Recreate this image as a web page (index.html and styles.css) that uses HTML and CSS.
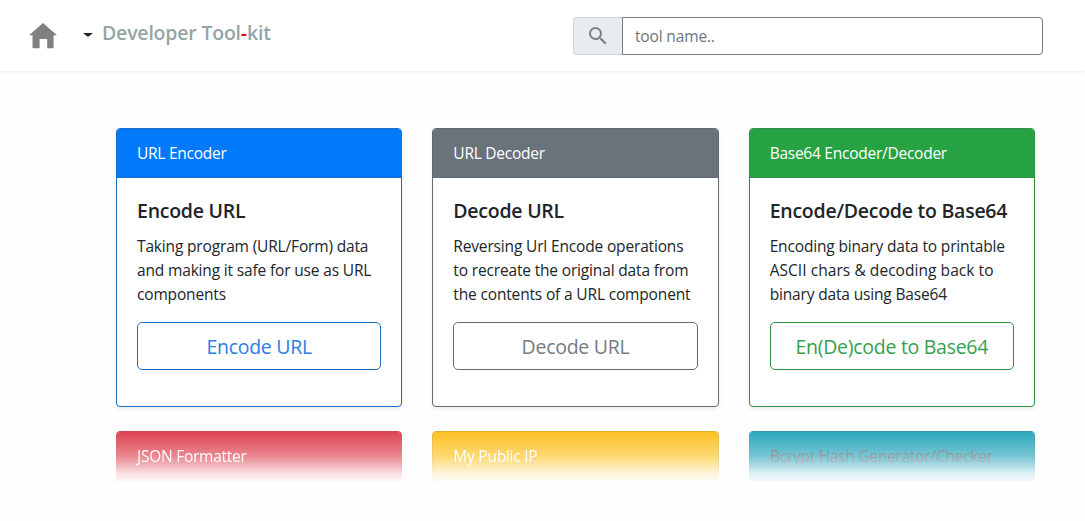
FILE: index.html
```html
<!DOCTYPE html>
<html lang="en">
<head>
<meta charset="utf-8">
<title>Developer Tool-kit</title>
<link rel="stylesheet" href="styles.css">
</head>
<body>
<header class="navbar">
  <div class="brand">
    <svg class="home" viewBox="0 0 28 26" width="28" height="26"><path d="M14 0 28 12.2H24.6V24q0 1.3-1.3 1.3H18.2V16H10.6V25.3H4.8q-1.3 0-1.3-1.3V12.2H0Z"/></svg>
    <span class="caret"></span>
    <span class="name">Developer Tool<span class="dash">-</span>kit</span>
  </div>
  <div class="search">
    <span class="search-icon"><svg viewBox="0 0 24 24" width="24" height="24"><path d="M15.5 14h-.79l-.28-.27A6.47 6.47 0 0 0 16 9.5 6.5 6.5 0 1 0 9.5 16c1.61 0 3.09-.59 4.23-1.57l.27.28v.79l5 4.99L20.49 19l-4.99-5zm-6 0a4.5 4.5 0 1 1 0-9 4.5 4.5 0 0 1 0 9z"/></svg></span>
    <input class="search-input" type="text" placeholder="tool name..">
  </div>
</header>
<main class="cards">
  <section class="card primary">
    <div class="card-header">URL Encoder</div>
    <div class="card-body">
      <h5 class="title">Encode URL</h5>
      <p class="text">Taking program (URL/Form) data<br>and making it safe for use as URL<br>components</p>
      <a class="btn">Encode URL</a>
    </div>
  </section>
  <section class="card secondary">
    <div class="card-header">URL Decoder</div>
    <div class="card-body">
      <h5 class="title">Decode URL</h5>
      <p class="text">Reversing Url Encode operations<br>to recreate the original data from<br>the contents of a URL component</p>
      <a class="btn">Decode URL</a>
    </div>
  </section>
  <section class="card success">
    <div class="card-header">Base64 Encoder/Decoder</div>
    <div class="card-body">
      <h5 class="title">Encode/Decode to Base64</h5>
      <p class="text">Encoding binary data to printable<br><span class="loose">ASCII chars &amp; decoding back to</span><br>binary data using Base64</p>
      <a class="btn">En(De)code to Base64</a>
    </div>
  </section>
  <section class="card faded danger"><div class="card-header">JSON Formatter</div></section>
  <section class="card faded warning"><div class="card-header">My Public IP</div></section>
  <section class="card faded info"><div class="card-header">Bcrypt Hash Generator/Checker</div></section>
</main>
</body>
</html>
```
FILE: styles.css
```css
* { box-sizing: border-box; }
body {
  margin: 0;
  height: 521px;
  overflow: hidden;
  background: #fefefe;
  color: #212529;
  font: 400 15.5px/24px "Open Sans", "Noto Sans", sans-serif;
  letter-spacing: -.16px;
}
.navbar {
  height: 71px;
  padding: 17px 42px 0 29px;
  display: flex;
  justify-content: space-between;
  align-items: flex-start;
  background: #fff;
  box-shadow: 0 1px 2px rgba(0, 0, 0, .08);
}
.brand { display: flex; align-items: flex-start; }
.home { margin-top: 6px; fill: #808080; }
.caret {
  margin: 16px 9px 0 26px;
  border: 5px solid transparent;
  border-top-color: #212529;
  border-top-width: 4px;
  border-bottom: 0;
}
.name { font-size: 19.5px; line-height: 31px; font-weight: 600; color: #95a5a6; letter-spacing: -.2px; }
.dash { color: #f00; }
.search { display: flex; width: 470px; height: 38px; }
.search-icon {
  width: 49px;
  padding: 6px 0 0 12px;
  background: #e9ecef;
  border: 1px solid #ced4da;
  border-right: 0;
  border-radius: 4px 0 0 4px;
}
.search-icon svg { display: block; fill: #808080; }
.search-input {
  flex: 1;
  min-width: 0;
  padding: 0 12px 1px;
  border: 1px solid #7b7b7f;
  border-radius: 0 4px 4px 0;
  background: #fff;
  font: inherit;
  letter-spacing: -.15px;
}
.search-input::placeholder { color: #6c757d; opacity: 1; }
.cards {
  display: grid;
  grid-template-columns: repeat(3, 1fr);
  grid-template-rows: 279px 54px;
  gap: 24px 30px;
  padding: 57px 50px 0 116px;
}
.card {
  border: 1px solid var(--line);
  border-radius: 4px;
  background: #fff;
  overflow: hidden;
  box-shadow: 0 2px 4px rgba(0, 0, 0, .075);
}
.card-header {
  height: 49px;
  padding: 12px 20px;
  background: var(--fill);
  border-bottom: 1px solid var(--line);
  color: #fff;
  letter-spacing: -.25px;
}
.card-body { padding: 21px 20px 20px; }
.title { margin: 0 0 11px; font-size: 19.5px; line-height: 24px; font-weight: 600; letter-spacing: -.25px; }
.text { margin: 0 0 16px; white-space: nowrap; }
.loose { letter-spacing: -.15px; word-spacing: .1px; }
.btn {
  display: block;
  height: 48px;
  border: 1px solid var(--line);
  border-radius: 5px;
  font-size: 19.5px;
  line-height: 48px;
  text-align: center;
  letter-spacing: -.28px;
}
.text .loose { letter-spacing: .04px; }
.primary { --fill: #0079fb; --line: #1a6fc4; }
.primary .btn { color: #2b7de9; }
.secondary { --fill: #6a727b; --line: #636a70; }
.success { --fill: #27a243; --line: #2f8f48; }
.danger { --fill: #dc3545; --line: #c33c4c; }
.warning { --fill: #fcbe12; --line: #dfae28; }
.info { --fill: #1b9fb7; --line: #238fa3; }
.info .card-header { color: #5c5c5c; }
.secondary .btn { color: #757b82; }
.success .btn { color: #35a04e; }
.faded {
  box-shadow: none;
  border-bottom: 0;
  -webkit-mask-image: linear-gradient(#000e, #000c 10px, #0009 25px, #0002 43px, transparent 54px);
  mask-image: linear-gradient(#000e, #000c 10px, #0009 25px, #0002 43px, transparent 54px);
}
.faded .card-header { border-bottom: 0; }
```
